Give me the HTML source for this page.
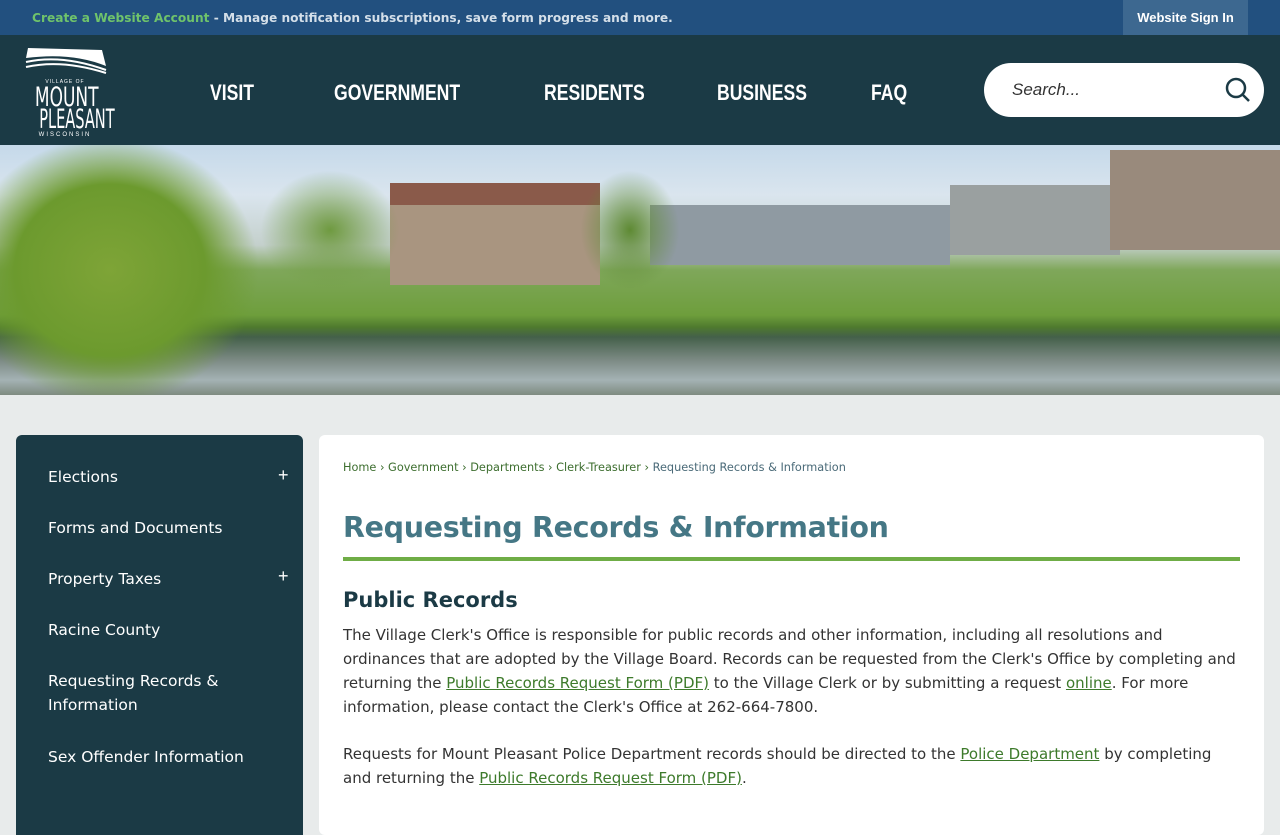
<!DOCTYPE html>
<html><head><meta charset="utf-8"><style>
*{margin:0;padding:0;box-sizing:border-box}
body{width:1280px;height:800px;overflow:hidden;background:#e8ebeb;font-family:"Liberation Sans",sans-serif;position:relative}
.top{position:absolute;left:0;top:0;width:1280px;height:35px;background:#22507f;color:#d4dfe9;font-size:12.2px;font-weight:bold;font-family:"DejaVu Sans",sans-serif}
.top .msg{position:absolute;left:32px;top:11px;transform:scaleX(1.0);transform-origin:left}
.top .msg b{color:#6fc36b}
.top .sign{position:absolute;left:1123px;top:0;width:125px;height:35px;background:#3d6890;color:#fff;text-align:center;line-height:35px;font-size:13px;font-family:"Liberation Sans",sans-serif}
.hdr{position:absolute;left:0;top:35px;width:1280px;height:110px;background:#1b3a45}
.nav{position:absolute;top:80px;color:#fff;font-weight:bold;font-size:22px;transform:scaleX(.8);transform-origin:left}
.search{position:absolute;left:984px;top:63px;width:280px;height:54px;background:#fff;border-radius:27px}
.search span{position:absolute;left:28px;top:17px;font-style:italic;font-size:17px;color:#333}
.logo{position:absolute;left:22px;top:44px;width:86px;height:96px;color:#fff;text-align:center}
.banner{position:absolute;left:0;top:145px;width:1280px;height:250px;overflow:hidden;background:linear-gradient(#c5d9ea 0,#dae5ee 50px,#c4d0cc 100px,#7fa75a 125px,#6e9e3c 170px,#4f7a2e 182px,#44604a 192px,#7c8a84 215px,#a4b2b4 235px,#7e8b80 250px)}
.side{position:absolute;left:16px;top:435px;width:287px;height:400px;background:#1b3a45;border-radius:6px 6px 0 0}
.side div{position:absolute;left:32px;color:#fff;font-size:15.5px;line-height:24px;font-family:"DejaVu Sans",sans-serif}
.side i{position:absolute;left:262px;color:#fff;font-style:normal;font-size:18px}
.card{position:absolute;left:319px;top:435px;width:945px;height:400px;background:#fff;border-radius:6px}
.bc{position:absolute;left:24px;top:26px;font-size:11.3px;color:#3d6e2f;font-family:"DejaVu Sans",sans-serif}
.bc span{color:#4a6a78}
h1{position:absolute;left:24px;top:76px;font-family:"DejaVu Sans",sans-serif;font-size:28.5px;color:#457785;font-weight:bold;letter-spacing:-.3px}
.rule{position:absolute;left:24px;top:122px;width:897px;height:4px;background:#6fad46}
h2{position:absolute;left:24px;top:153px;font-family:"DejaVu Sans",sans-serif;font-size:21px;color:#1b3a45;font-weight:bold}
.p{position:absolute;left:24px;width:900px;font-size:15px;line-height:24px;color:#333;font-family:"DejaVu Sans",sans-serif}
.p a{color:#3d7a2b;text-decoration:underline}
</style></head><body>
<div class="top"><div class="msg"><b>Create a Website Account</b> - Manage notification subscriptions, save form progress and more.</div><div class="sign">Website Sign In</div></div>
<div class="hdr"></div>
<div class="logo">
<svg width="86" height="30" viewBox="0 0 86 30"><path d="M6 4 L80 6 L84 22 Q50 8 4 14Z" fill="#fff"/><path d="M4 18 Q40 10 84 26" stroke="#fff" stroke-width="2" fill="none"/><path d="M4 23 Q40 15 84 29" stroke="#fff" stroke-width="2" fill="none"/></svg>
<div style="font-size:5px;letter-spacing:1px">VILLAGE OF</div>
<div style="font-size:27px;line-height:25px;transform:scaleX(.7);font-family:'DejaVu Sans Condensed',sans-serif">MOUNT</div>
<div style="font-size:27px;line-height:25px;transform:scaleX(.6);font-family:'DejaVu Sans Condensed',sans-serif;margin-top:-3px">PLEASANT</div>
<div style="font-size:6px;letter-spacing:2px">WISCONSIN</div>
</div>
<div class="nav" style="left:210px">VISIT</div>
<div class="nav" style="left:334px">GOVERNMENT</div>
<div class="nav" style="left:544px">RESIDENTS</div>
<div class="nav" style="left:717px">BUSINESS</div>
<div class="nav" style="left:871px">FAQ</div>
<div class="search"><span>Search...</span><svg style="position:absolute;left:240px;top:13px" width="28" height="28" viewBox="0 0 28 28"><circle cx="12" cy="12" r="9" stroke="#1b3a45" stroke-width="2.5" fill="none"/><path d="M18.5 18.5 L25 25" stroke="#1b3a45" stroke-width="2.5"/></svg></div>
<div class="banner">
<div style="position:absolute;left:390px;top:40px;width:210px;height:100px;background:#a99580"></div>
<div style="position:absolute;left:390px;top:38px;width:210px;height:22px;background:#8a5a4a"></div>
<div style="position:absolute;left:650px;top:60px;width:300px;height:60px;background:#8f9aa2"></div>
<div style="position:absolute;left:950px;top:40px;width:170px;height:70px;background:#9aa0a0"></div>
<div style="position:absolute;left:1110px;top:5px;width:170px;height:100px;background:#998a7c"></div>
<div style="position:absolute;left:-40px;top:-10px;width:300px;height:270px;background:radial-gradient(ellipse at 50% 50%,#7ea437 0,#6c9a2e 45%,rgba(100,140,50,0) 70%)"></div>
<div style="position:absolute;left:260px;top:25px;width:140px;height:120px;background:radial-gradient(ellipse,#6f9a40 0,rgba(110,150,60,0) 70%)"></div>
<div style="position:absolute;left:580px;top:25px;width:100px;height:120px;background:radial-gradient(ellipse,#5e8a33 0,rgba(90,130,50,0) 70%)"></div>
</div>
<div class="side">
<div style="top:30px">Elections</div><i style="top:30px">+</i>
<div style="top:81px">Forms and Documents</div>
<div style="top:132px">Property Taxes</div><i style="top:131px">+</i>
<div style="top:183px">Racine County</div>
<div style="top:234px">Requesting Records &amp;<br>Information</div>
<div style="top:310px">Sex Offender Information</div>
</div>
<div class="card">
<div class="bc">Home › Government › Departments › Clerk-Treasurer › <span>Requesting Records &amp; Information</span></div>
<h1>Requesting Records &amp; Information</h1>
<div class="rule"></div>
<h2>Public Records</h2>
<div class="p" style="top:188px">The Village Clerk's Office is responsible for public records and other information, including all resolutions and ordinances that are adopted by the Village Board. Records can be requested from the Clerk's Office by completing and returning the <a>Public Records Request Form (PDF)</a> to the Village Clerk or by submitting a request <a>online</a>. For more information, please contact the Clerk's Office at 262-664-7800.</div>
<div class="p" style="top:307px">Requests for Mount Pleasant Police Department records should be directed to the <a>Police Department</a> by completing and returning the <a>Public Records Request Form (PDF)</a>.</div>
</div>
</body></html>
